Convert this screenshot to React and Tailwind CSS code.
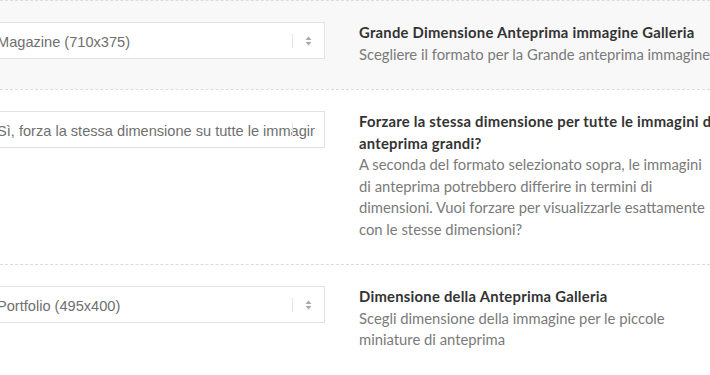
import React from 'react';

const rows = [
  {
    value: 'Magazine (710x375)',
    title: ['Grande Dimensione Anteprima immagine Galleria'],
    desc: ['Scegliere il formato per la Grande anteprima immagine della galleria'],
    shaded: true,
    arrows: true,
  },
  {
    value: 'Sì, forza la stessa dimensione su tutte le immagini di anteprima',
    title: ['Forzare la stessa dimensione per tutte le immagini di', 'anteprima grandi?'],
    desc: [
      'A seconda del formato selezionato sopra, le immagini',
      'di anteprima potrebbero differire in termini di',
      'dimensioni. Vuoi forzare per visualizzarle esattamente',
      'con le stesse dimensioni?',
    ],
    shaded: false,
    arrows: false,
  },
  {
    value: 'Portfolio (495x400)',
    title: ['Dimensione della Anteprima Galleria'],
    desc: ['Scegli dimensione della immagine per le piccole', 'miniature di anteprima'],
    shaded: false,
    arrows: true,
  },
];

function SelectBox({ value, arrows }) {
  return (
    <div className="relative h-[37px] w-[340px] shrink-0 border border-[#e2e2e2] bg-white">
      <div
        className="ml-[11px] mr-[9px] overflow-hidden whitespace-nowrap text-[14.6px] leading-[38px] text-[#6f6f6f]"
        style={{ fontFamily: '"Liberation Sans", Arial, sans-serif' }}
      >
        {value}
      </div>
      <span className="absolute left-[306px] top-[11px] h-[14px] w-px bg-[#e4e4e4]" />
      {arrows && (
        <svg className="absolute left-[319px] top-[13px]" width="7" height="10" viewBox="0 0 7 10">
          <path d="M3.5 0.5 L6.5 4 L0.5 4 Z" fill="#aaa" />
          <path d="M3.5 9.5 L6.5 6 L0.5 6 Z" fill="#aaa" />
        </svg>
      )}
    </div>
  );
}

export default function App() {
  return (
    <div className="h-[375px] w-[710px] overflow-hidden bg-white">
      <div className="ml-[-15px] w-[760px]" style={{ fontFamily: 'Lato, "Noto Sans", sans-serif' }}>
        {rows.map((row, i) => (
          <div
            key={i}
            className={`flex gap-[34px] border-t border-dashed border-[#dcdcdc] pb-[24px] pt-[21px] ${
              row.shaded ? 'bg-[#f8f8f8]' : 'bg-white'
            }`}
          >
            <SelectBox value={row.value} arrows={row.arrows} />
            <div className="w-[380px] whitespace-nowrap leading-[21.5px]">
              {row.title.map((t) => (
                <div key={t} className="text-[14.8px] font-bold tracking-[0.25px] text-[#333]">
                  {t}
                </div>
              ))}
              {row.desc.map((d) => (
                <div key={d} className="text-[14.8px] text-[#7a7a7a]">
                  {d}
                </div>
              ))}
            </div>
          </div>
        ))}
      </div>
    </div>
  );
}
